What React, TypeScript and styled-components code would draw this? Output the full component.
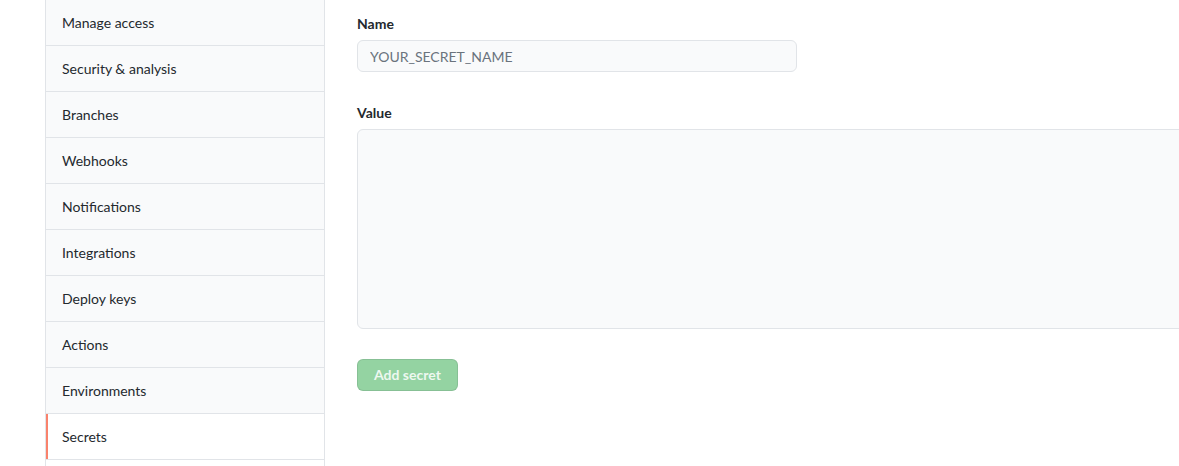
import styled, { createGlobalStyle } from 'styled-components';

const GlobalStyle = createGlobalStyle`
  html, body {
    margin: 0;
    padding: 0;
    background: #ffffff;
    font-family: "Segoe UI", Lato, "Noto Sans", sans-serif;
    color: #24292e;
  }
  * { box-sizing: border-box; }
`;

const Page = styled.div`
  display: flex;
  align-items: flex-start;
  padding-left: 45px;
  height: 466px;
  overflow: hidden;
`;

const Menu = styled.nav`
  width: 280px;
  flex-shrink: 0;
  margin-top: -1px;
  border: 1px solid #e1e4e8;
  border-bottom: none;
  display: flex;
  flex-direction: column;
`;

const MenuItem = styled.a<{ $active?: boolean; $plain?: boolean }>`
  position: relative;
  display: block;
  height: 46px;
  padding: 12px 16px;
  font-size: 14px;
  line-height: 21px;
  color: #24292e;
  text-decoration: none;
  border-top: 1px solid #e1e4e8;
  background: ${(p) => (p.$active || p.$plain ? '#ffffff' : '#f9fafb')};

  &:first-child {
    border-top: none;
    height: 45px;
  }

  ${(p) =>
    p.$active &&
    `
    &::before {
      content: '';
      position: absolute;
      left: 0;
      top: 0;
      bottom: 0;
      width: 2px;
      background: #f9826c;
    }
  `}
`;

const Main = styled.main`
  flex: 1;
  padding-left: 32px;
  padding-top: 14px;
  display: flex;
  flex-direction: column;
`;

const Field = styled.div<{ $gap: number }>`
  display: flex;
  flex-direction: column;
  margin-bottom: ${(p) => p.$gap}px;
`;

const Label = styled.label`
  font-size: 14px;
  font-weight: 700;
  line-height: 20px;
  margin-bottom: 6px;
`;

const TextInput = styled.input`
  width: 440px;
  height: 32px;
  padding: 5px 12px;
  font: inherit;
  font-size: 14px;
  line-height: 20px;
  color: #24292e;
  background: #f9fafb;
  border: 1px solid #e1e4e8;
  border-radius: 6px;
  outline: none;

  &::placeholder {
    color: #6a737d;
  }
`;

const TextArea = styled.textarea`
  width: calc(100% + 20px);
  height: 200px;
  padding: 8px 12px;
  font: inherit;
  font-size: 14px;
  background: #f9fafb;
  border: 1px solid #e1e4e8;
  border-radius: 6px;
  resize: none;
  outline: none;
  display: block;
`;

const SubmitButton = styled.button`
  align-self: flex-start;
  height: 32px;
  padding: 0 16px 2px;
  white-space: nowrap;
  font: inherit;
  font-size: 14px;
  font-weight: 700;
  color: rgba(255, 255, 255, 0.85);
  background: #94d3a2;
  border: 1px solid rgba(27, 31, 35, 0.1);
  border-radius: 6px;
  cursor: not-allowed;
`;

const items = [
  'Manage access',
  'Security & analysis',
  'Branches',
  'Webhooks',
  'Notifications',
  'Integrations',
  'Deploy keys',
  'Actions',
  'Environments',
  'Secrets',
];

export default function App() {
  return (
    <>
      <GlobalStyle />
      <Page>
        <Menu>
          {items.map((label) => (
            <MenuItem key={label} href="#" $active={label === 'Secrets'}>
              {label}
            </MenuItem>
          ))}
          <MenuItem href="#" $plain aria-hidden="true" />
        </Menu>
        <Main>
          <Field $gap={31}>
            <Label htmlFor="secret_name">Name</Label>
            <TextInput id="secret_name" placeholder="YOUR_SECRET_NAME" />
          </Field>
          <Field $gap={30}>
            <Label htmlFor="secret_value">Value</Label>
            <TextArea id="secret_value" />
          </Field>
          <SubmitButton disabled>Add secret</SubmitButton>
        </Main>
      </Page>
    </>
  );
}
